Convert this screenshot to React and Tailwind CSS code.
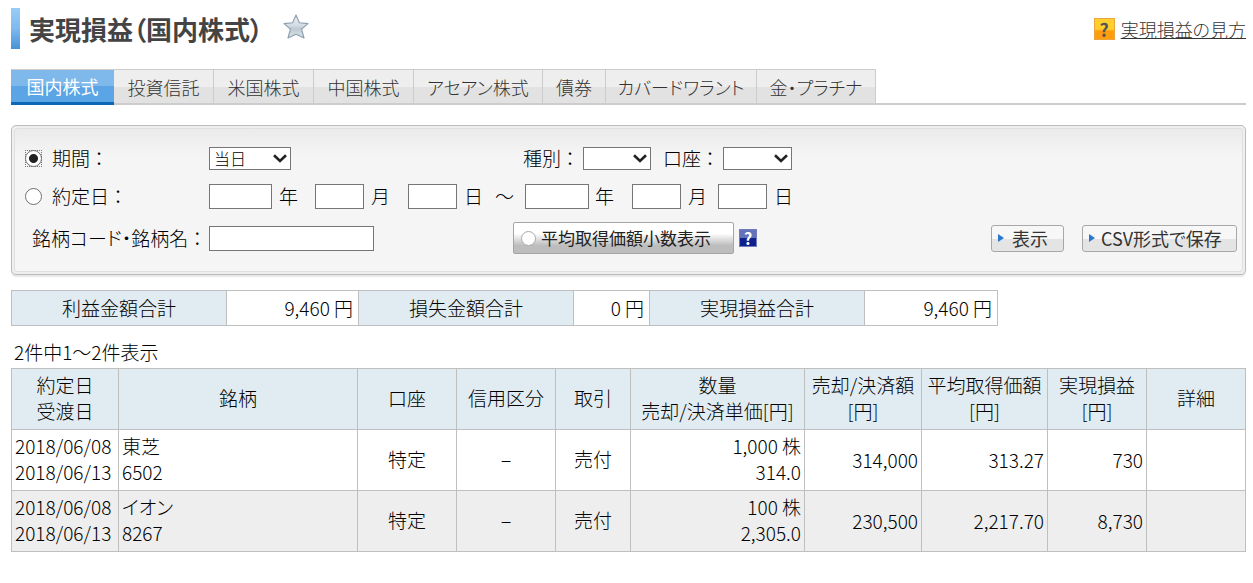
const tabs = [
  { label: "国内株式", width: "w-[103px]", active: true },
  { label: "投資信託", width: "w-[100px]" },
  { label: "米国株式", width: "w-[100px]" },
  { label: "中国株式", width: "w-[100px]" },
  { label: "アセアン株式", width: "w-[129px]" },
  { label: "債券", width: "w-[63px]" },
  { label: "カバードワラント", width: "w-[151px]" },
  { label: "金・プラチナ", width: "w-[119px]" },
];

const totals = [
  { label: "利益金額合計", value: "9,460 円", width: "w-[132px]" },
  { label: "損失金額合計", value: "0 円", width: "w-[76px]" },
  { label: "実現損益合計", value: "9,460 円", width: "w-[133px]" },
];

const columns = [
  { lines: ["約定日", "受渡日"], width: "w-[107px]" },
  { lines: ["銘柄"], width: "" },
  { lines: ["口座"], width: "w-[99px]" },
  { lines: ["信用区分"], width: "w-[99px]" },
  { lines: ["取引"], width: "w-[75px]" },
  { lines: ["数量", "売却/決済単価[円]"], width: "w-[174px]" },
  { lines: ["売却/決済額", "[円]"], width: "w-[117px]" },
  { lines: ["平均取得価額", "[円]"], width: "w-[126px]" },
  { lines: ["実現損益", "[円]"], width: "w-[99px]" },
  { lines: ["詳細"], width: "w-[99px]" },
];

const trades = [
  {
    tradeDate: "2018/06/08",
    settleDate: "2018/06/13",
    name: "東芝",
    code: "6502",
    account: "特定",
    margin: "−",
    side: "売付",
    quantity: "1,000 株",
    price: "314.0",
    amount: "314,000",
    average: "313.27",
    profit: "730",
  },
  {
    tradeDate: "2018/06/08",
    settleDate: "2018/06/13",
    name: "イオン",
    code: "8267",
    account: "特定",
    margin: "−",
    side: "売付",
    quantity: "100 株",
    price: "2,305.0",
    amount: "230,500",
    average: "2,217.70",
    profit: "8,730",
  },
];

function StarIcon() {
  return (
    <svg viewBox="0 0 26 25" className="h-[25px] w-[26px]" aria-hidden="true">
      <defs>
        <linearGradient id="star" x1="0" y1="0" x2="0" y2="1">
          <stop offset="0" stopColor="#eef2f5" />
          <stop offset="0.45" stopColor="#d3dde4" />
          <stop offset="0.6" stopColor="#bccad4" />
          <stop offset="1" stopColor="#dde5ea" />
        </linearGradient>
      </defs>
      <path
        d="M13 1L16.4 8.8L25 9.6L18.6 15.2L21 24L13 20.2L5 24L7.4 15.2L1 9.6L9.6 8.8Z"
        fill="url(#star)"
        stroke="#8c9dab"
        strokeWidth="1.1"
        strokeLinejoin="round"
      />
    </svg>
  );
}

function Select({ label, width, options }) {
  return (
    <span className={`relative inline-flex ${width}`}>
      <select
        aria-label={label}
        className="h-[23px] w-full appearance-none border border-[#767676] bg-white pl-1 text-[16px] leading-[20px] text-black"
      >
        {options.map((o) => (
          <option key={o}>{o}</option>
        ))}
      </select>
      <svg viewBox="0 0 14 9" className="pointer-events-none absolute top-[7px] right-1 h-[9px] w-[14px]" aria-hidden="true">
        <path d="M1 1.2L7 7L13 1.2" fill="none" stroke="#222" strokeWidth="2.6" />
      </svg>
    </span>
  );
}

function TextInput({ label, width }) {
  return (
    <input
      type="text"
      aria-label={label}
      className={`h-[25px] border border-[#767676] bg-white px-1 text-[16px] ${width}`}
    />
  );
}

function Radio({ id, checked }) {
  return (
    <span className="flex size-[17px] shrink-0 has-checked:outline-1 has-checked:-outline-offset-1 has-checked:outline-[#777] has-checked:outline-dotted">
      <input
        type="radio"
        id={id}
        name="range"
        defaultChecked={checked}
        className="size-[17px] appearance-none rounded-full border border-[#707070] bg-white checked:bg-[radial-gradient(circle,#222_0_4px,#fff_5px)]"
      />
    </span>
  );
}

function ActionButton({ width, children }) {
  return (
    <button
      type="button"
      className={`flex h-[27px] items-center gap-[6px] rounded-[3px] border border-[#a8a8a8] bg-linear-to-b from-[#f7f7f7] from-50% to-[#e4e4e4] to-50% pl-[6px] text-[18px] leading-[24px] font-normal whitespace-nowrap text-[#333] ${width}`}
    >
      <svg viewBox="0 0 6 8" className="h-2 w-[6px]" aria-hidden="true">
        <path d="M0 0L6 4L0 8Z" fill="#2878d0" />
      </svg>
      {children}
    </button>
  );
}

function SearchForm() {
  return (
    <form className="mt-5 rounded-[5px] border border-[#bcbcbc] bg-[#efefef] p-[2px] shadow-[0_2px_1px_#e8e8e8]">
      <div className="flex flex-col rounded-[3px] border border-[#e0e0e0] bg-linear-to-b from-[#ebebeb] to-[#f5f5f5] to-[28px] pt-4 pr-[5px] pb-[17px] pl-[10px] text-[19px] leading-[26px]">
        <div className="flex h-[26px] items-center">
          <div className="flex w-[184px] items-center gap-[10px]">
            <Radio id="range-period" checked />
            <label htmlFor="range-period">期間 ：</label>
          </div>
          <Select label="期間" width="w-[82px]" options={["当日"]} />
          <span className="ml-[232px] w-[60px] whitespace-nowrap">種別 ：</span>
          <Select label="種別" width="w-[68px]" options={[""]} />
          <span className="ml-3 w-[60px] whitespace-nowrap">口座 ：</span>
          <Select label="口座" width="w-[69px]" options={[""]} />
        </div>

        <div className="mt-3 flex h-[26px] items-center">
          <div className="flex w-[184px] items-center gap-[10px]">
            <Radio id="range-date" />
            <label htmlFor="range-date">約定日 ：</label>
          </div>
          <TextInput label="開始年" width="w-[63px]" />
          <span className="ml-[7px] w-9">年</span>
          <TextInput label="開始月" width="w-[49px]" />
          <span className="ml-[7px] w-[37px]">月</span>
          <TextInput label="開始日" width="w-[49px]" />
          <span className="ml-[7px] w-[31px]">日</span>
          <span className="w-[30px]">～</span>
          <TextInput label="終了年" width="w-[64px]" />
          <span className="ml-[6px] w-[37px]">年</span>
          <TextInput label="終了月" width="w-[49px]" />
          <span className="ml-[7px] w-[30px]">月</span>
          <TextInput label="終了日" width="w-[49px]" />
          <span className="ml-[7px]">日</span>
        </div>

        <div className="mt-[13px] flex h-[32px] items-center">
          <label htmlFor="stock" className="w-[184px] pl-[7px] whitespace-nowrap">
            銘柄コード・銘柄名 ：
          </label>
          <input id="stock" type="text" className="h-[25px] w-[165px] border border-[#767676] bg-white px-1 text-[16px]" />
          <button
            type="button"
            className="ml-[139px] flex h-[32px] w-[221px] items-center gap-[5px] rounded-xs border border-[#a5a5a5] bg-linear-to-b from-white from-35% to-[#bdbdbd] to-75% pl-[7px] text-[17px] font-normal whitespace-nowrap text-[#222]"
          >
            <span className="size-[15px] rounded-full border border-[#aaa] bg-white" />
            平均取得価額小数表示
          </button>
          <button
            type="button"
            aria-label="ヘルプ"
            className="ml-[5px] flex size-[18px] items-center justify-center border border-[#6f7cc0] bg-linear-to-b from-[#6672b8] from-50% to-[#10218b] to-50% text-[16px] leading-[16px] font-bold text-white"
          >
            ?
          </button>
          <div className="ml-auto flex gap-[18px]">
            <ActionButton width="w-[73px]">
              <span className="pl-[2px]">表示</span>
            </ActionButton>
            <ActionButton width="w-[155px]">CSV形式で保存</ActionButton>
          </div>
        </div>
      </div>
    </form>
  );
}

function TotalsTable() {
  return (
    <table className="mt-[15px] border-collapse text-[19px] leading-[26px]">
      <tbody>
        <tr className="h-[35px]">
          {totals.map((t) => (
            [
              <th key={t.label} scope="row" className="w-[215px] border border-[#bfbfbf] bg-[#e1ecf2] text-center font-light">
                {t.label}
              </th>,
              <td key={`${t.label}-value`} className={`border border-[#bfbfbf] bg-white pr-[5px] text-right ${t.width}`}>
                {t.value}
              </td>,
            ]
          ))}
        </tr>
      </tbody>
    </table>
  );
}

function TradesTable() {
  const cell = "border border-[#bfbfbf] px-[3px]";

  return (
    <table className="w-full table-fixed border-collapse text-[19px] leading-[26px]">
      <thead>
        <tr className="h-[61px] bg-[#e1ecf2]">
          {columns.map((c) => (
            <th key={c.lines[0]} scope="col" className={`border border-[#bfbfbf] pb-[2px] text-center font-light whitespace-nowrap ${c.width}`}>
              {c.lines.map((line) => (
                <div key={line}>{line}</div>
              ))}
            </th>
          ))}
        </tr>
      </thead>
      <tbody>
        {trades.map((t) => (
          <tr key={t.code} className="h-[61px] even:bg-[#eee]">
            <td className={`${cell} pb-[2px] whitespace-nowrap`}>
              <div>{t.tradeDate}</div>
              <div>{t.settleDate}</div>
            </td>
            <td className={`${cell} pb-[2px]`}>
              <div>{t.name}</div>
              <div>{t.code}</div>
            </td>
            <td className={`${cell} pb-[2px] text-center`}>{t.account}</td>
            <td className={`${cell} text-center`}>{t.margin}</td>
            <td className={`${cell} pb-[2px] text-center`}>{t.side}</td>
            <td className={`${cell} pb-[2px] text-right`}>
              <div>{t.quantity}</div>
              <div>{t.price}</div>
            </td>
            <td className={`${cell} text-right`}>{t.amount}</td>
            <td className={`${cell} text-right`}>{t.average}</td>
            <td className={`${cell} text-right`}>{t.profit}</td>
            <td className={cell}></td>
          </tr>
        ))}
      </tbody>
    </table>
  );
}

export default function App() {
  return (
    <div className="bg-white pt-2 pr-[7px] pb-8 pl-[11px] font-['Noto_Sans_CJK_JP',sans-serif] font-light text-black [font-feature-settings:'palt']">
      <header className="flex items-center">
        <span className="h-[41px] w-[9px] bg-linear-to-b from-[#99cdf8] from-0% via-[#7fb9ee] via-50% to-[#4692d6]" />
        <h1 className="ml-[9px] text-[26px] leading-[41px] font-bold text-[#444]">実現損益（国内株式）</h1>
        <button type="button" aria-label="お気に入りに追加" className="ml-5 pb-1">
          <StarIcon />
        </button>
        <a href="#guide" className="ml-auto flex items-center gap-[6px] text-[18px] leading-[26px] text-[#333]">
          <span className="flex h-[22px] w-[21px] items-center justify-center border border-[#eba53c] bg-linear-to-b from-[#ffcf2e] from-50% to-[#ff9e0c] to-60% text-[18px] leading-[20px] font-bold text-[#555]">
            ?
          </span>
          <span className="underline">実現損益の見方</span>
        </a>
      </header>

      <nav className="mt-5 flex h-9 border-b-2 border-[#ccc]">
        {tabs.map((tab) => (
          <a
            key={tab.label}
            href="#tab"
            aria-current={tab.active ? "page" : undefined}
            className={
              tab.active
                ? `flex h-9 items-center justify-center border-t border-b-3 border-t-[#ccc] border-b-[#0f67b9] bg-linear-to-b from-[#7fb8ea] from-50% to-[#5ba4e5] to-50% text-[18px] leading-[26px] font-normal whitespace-nowrap text-white ${tab.width}`
                : `flex items-center justify-center border-t border-r border-[#ccc] bg-linear-to-b from-[#eee] from-50% to-[#e2e2e2] to-50% text-[18px] leading-[26px] whitespace-nowrap text-[#333] ${tab.width}`
            }
          >
            {tab.label}
          </a>
        ))}
      </nav>

      <main>
        <SearchForm />
        <TotalsTable />
        <p className="mt-[13px] mb-1 pl-[3px] text-[19px] leading-[25px]">2件中1～2件表示</p>
        <TradesTable />
      </main>
    </div>
  );
}
